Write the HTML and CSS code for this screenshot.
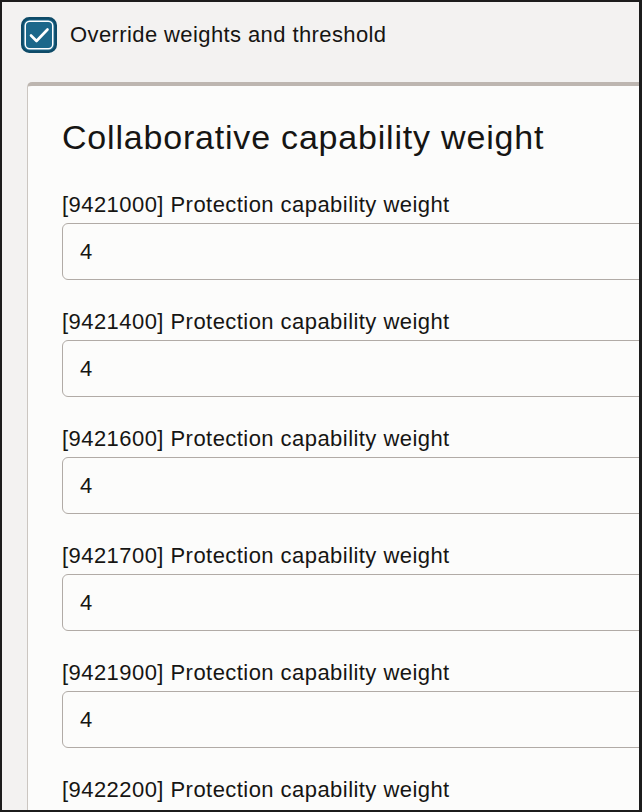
FILE: index.html
```html
<!DOCTYPE html>
<html lang="en">
<head>
<meta charset="utf-8">
<title>Override weights</title>
<link rel="stylesheet" href="styles.css">
</head>
<body>
<div class="frame">
  <label class="override">
    <svg class="checkbox" width="36" height="36" viewBox="0 0 36 36" aria-hidden="true">
      <rect x="1.25" y="1.25" width="33.5" height="33.5" rx="7" fill="#1b678a" stroke="#0e4b68" stroke-width="2.5"/>
      <rect x="4.25" y="4.25" width="27.5" height="27.5" rx="4.5" fill="none" stroke="#ffffff" stroke-width="1.5"/>
      <polyline points="10,18.5 15.5,24 26.5,12.5" fill="none" stroke="#ffffff" stroke-width="2.6" stroke-linecap="round" stroke-linejoin="round"/>
    </svg>
    <span class="override-text">Override weights and threshold</span>
  </label>

  <section class="card">
    <h1 class="card-title">Collaborative capability weight</h1>
    <div class="fields">
      <div class="field">
        <div class="field-label">[9421000] Protection capability weight</div>
        <div class="field-input">4</div>
      </div>
      <div class="field">
        <div class="field-label">[9421400] Protection capability weight</div>
        <div class="field-input">4</div>
      </div>
      <div class="field">
        <div class="field-label">[9421600] Protection capability weight</div>
        <div class="field-input">4</div>
      </div>
      <div class="field">
        <div class="field-label">[9421700] Protection capability weight</div>
        <div class="field-input">4</div>
      </div>
      <div class="field">
        <div class="field-label">[9421900] Protection capability weight</div>
        <div class="field-input">4</div>
      </div>
      <div class="field">
        <div class="field-label">[9422200] Protection capability weight</div>
      </div>
    </div>
  </section>
</div>
</body>
</html>
```

FILE: styles.css
```css
* { box-sizing: border-box; }

html, body {
  margin: 0;
  padding: 0;
  background: #f3f2f1;
}

body {
  font-family: "Liberation Sans", Arial, sans-serif;
  color: #161513;
}

.frame {
  width: 642px;
  height: 812px;
  overflow: hidden;
  background: #f3f2f1;
  border: 2px solid #1c1c1c;
  border-right-width: 3px;
  padding: 15px 0 0 19px;
}

.override {
  display: flex;
  align-items: center;
  gap: 13px;
  height: 36px;
}

.checkbox {
  display: block;
  flex: none;
}

.override-text {
  font-size: 22px;
  letter-spacing: 0.4px;
  line-height: 26px;
}

.card {
  margin-top: 29px;
  margin-left: 6px;
  width: 720px;
  min-height: 760px;
  background: #fcfcfb;
  border-top: 4px solid #bdb6b0;
  border-left: 1px solid #cbc6c1;
  border-top-left-radius: 5px;
  padding: 31px 0 0 34px;
}

.card-title {
  margin: 0;
  font-size: 34px;
  font-weight: 400;
  letter-spacing: 0.8px;
  line-height: 40px;
}

.fields {
  display: flex;
  flex-direction: column;
  gap: 29px;
  margin-top: 35px;
}

.field {
  display: flex;
  flex-direction: column;
  gap: 5px;
}

.field-label {
  font-size: 22px;
  letter-spacing: 0.45px;
  line-height: 26px;
}

.field-input {
  height: 57px;
  border: 1px solid #b1aba6;
  border-radius: 6px;
  background: #fcfcfb;
  padding-left: 17px;
  display: flex;
  align-items: center;
  font-size: 22px;
  line-height: 26px;
}
```
